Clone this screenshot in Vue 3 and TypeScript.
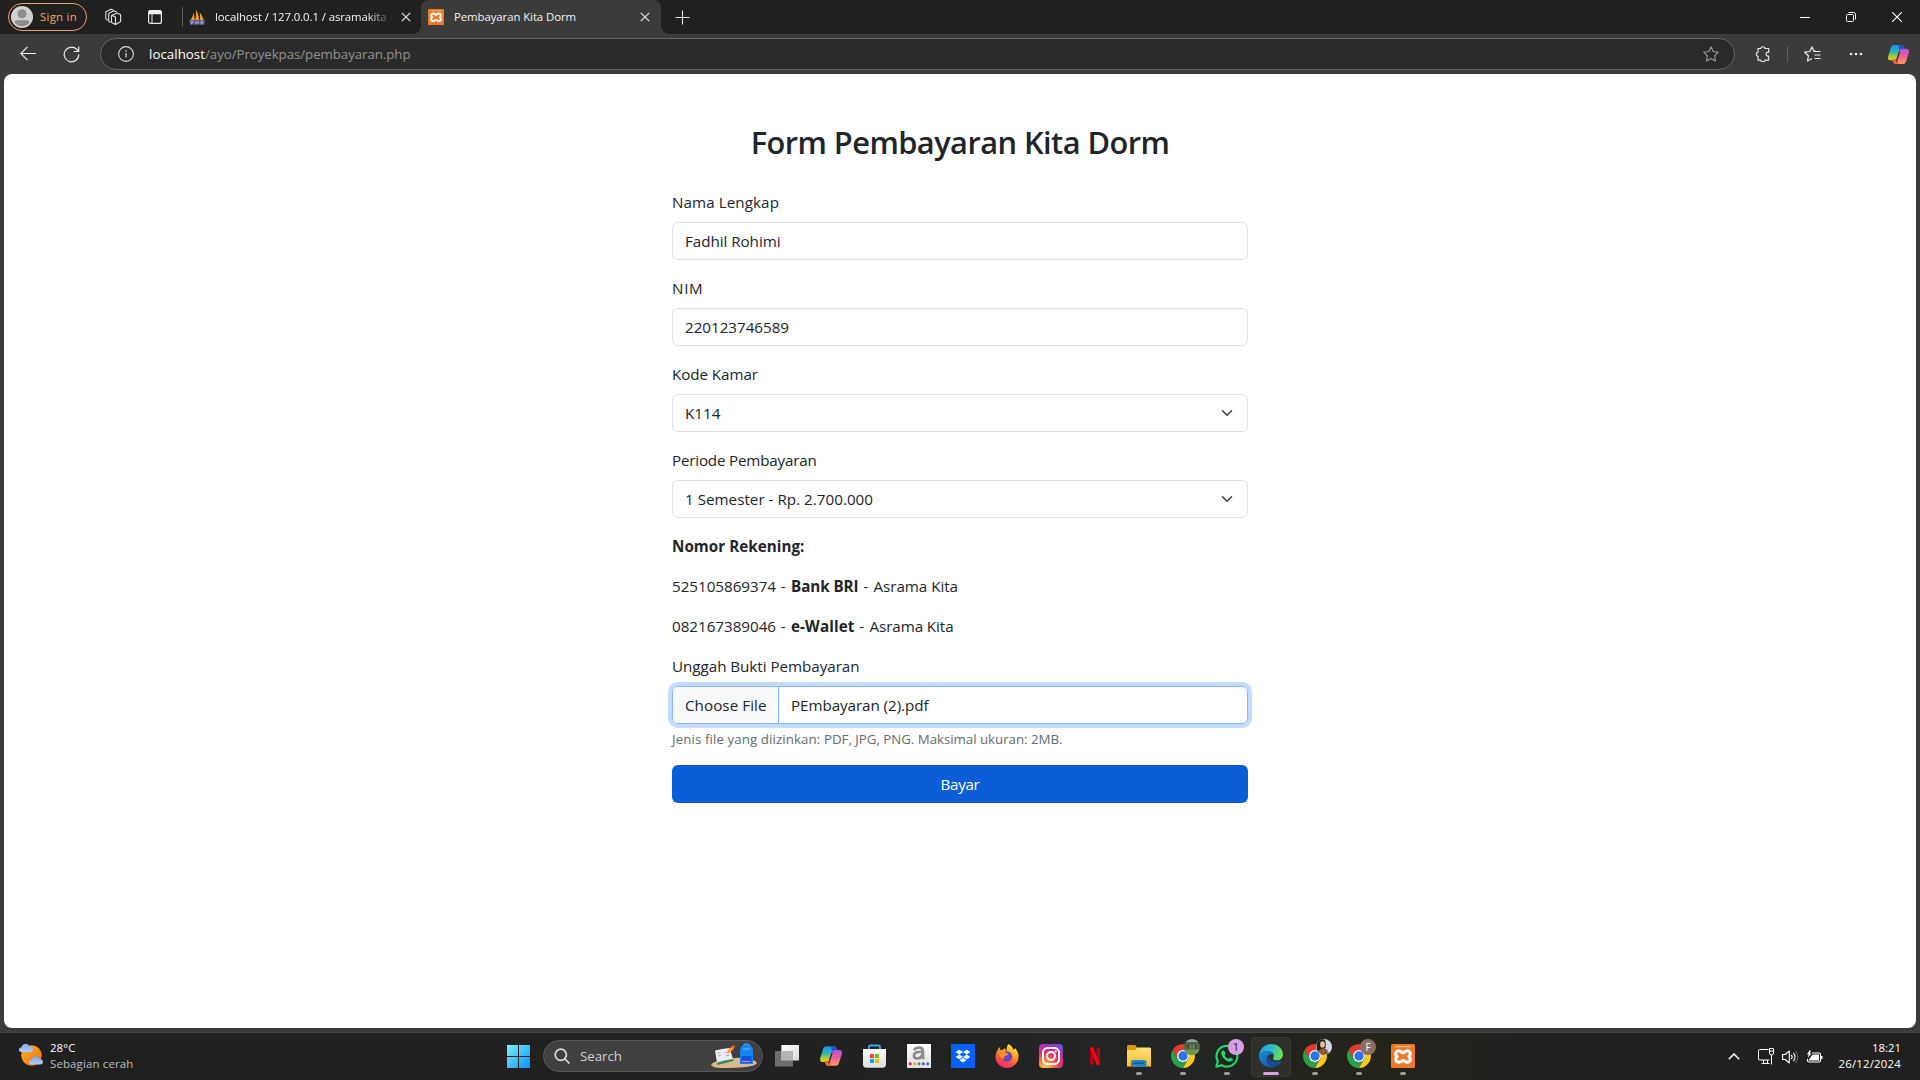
<script setup lang="ts">
interface Field {
  label: string
  labelWidth: number
  value: string
  valueWidth: number
  select?: boolean
}

interface TaskItem {
  id: string
  running?: boolean
  active?: boolean
  badge?: 'photo-green' | 'photo-portrait' | 'count' | 'initial'
  badgeText?: string
}

// Spreads the letters of an element over the given advance width.
const vFit = {
  mounted(el: HTMLElement, binding: { value: number }) {
    const count = (el.textContent ?? '').length
    if (!count) return
    const natural = el.getBoundingClientRect().width
    el.style.letterSpacing = `${(binding.value - natural) / count}px`
  },
}

const fields: Field[] = [
  { label: 'Nama Lengkap', labelWidth: 107, value: 'Fadhil Rohimi', valueWidth: 95.5 },
  { label: 'NIM', labelWidth: 31.5, value: '220123746589', valueWidth: 104 },
  { label: 'Kode Kamar', labelWidth: 86, value: 'K114', valueWidth: 35.5, select: true },
  { label: 'Periode Pembayaran', labelWidth: 144.5, value: '1 Semester - Rp. 2.700.000', valueWidth: 188, select: true },
]

const accounts = [
  { number: '525105869374', numberWidth: 104, name: 'Bank BRI', nameWidth: 67.5, owner: 'Asrama Kita', ownerWidth: 84.5 },
  { number: '082167389046', numberWidth: 104, name: 'e-Wallet', nameWidth: 63.5, owner: 'Asrama Kita', ownerWidth: 84 },
]

const tasks: TaskItem[] = [
  { id: 'taskview' },
  { id: 'copilot' },
  { id: 'store' },
  { id: 'amazon' },
  { id: 'dropbox' },
  { id: 'firefox' },
  { id: 'instagram' },
  { id: 'netflix' },
  { id: 'folder', running: true },
  { id: 'chrome', running: true, badge: 'photo-green' },
  { id: 'whatsapp', running: true, badge: 'count', badgeText: '1' },
  { id: 'edge', running: true, active: true },
  { id: 'chrome', running: true, badge: 'photo-portrait' },
  { id: 'chrome', running: true, badge: 'initial', badgeText: 'F' },
  { id: 'xampp', running: true },
]
</script>

<template>
  <div class="screen">
    <svg class="sprites" width="0" height="0" aria-hidden="true">
      <defs>
        <linearGradient id="cpA" x1="0" y1="0" x2="0" y2="1">
          <stop offset="0" stop-color="#1b8fe8" /><stop offset=".45" stop-color="#2fb5b0" /><stop offset=".75" stop-color="#a9c93a" /><stop offset="1" stop-color="#f5cf1d" />
        </linearGradient>
        <linearGradient id="cpB" x1="0" y1="0" x2="0" y2="1">
          <stop offset="0" stop-color="#a951e8" /><stop offset=".45" stop-color="#ee5c9c" /><stop offset="1" stop-color="#ff9a5a" />
        </linearGradient>
        <linearGradient id="ffA" x1=".8" y1="0" x2=".3" y2="1">
          <stop offset="0" stop-color="#fff04a" /><stop offset=".4" stop-color="#ffa020" /><stop offset=".75" stop-color="#ff4a3c" /><stop offset="1" stop-color="#f0268a" />
        </linearGradient>
        <radialGradient id="igA" cx=".25" cy="1" r="1.2">
          <stop offset="0" stop-color="#ffd45c" /><stop offset=".3" stop-color="#fb7a3c" /><stop offset=".55" stop-color="#e0306e" /><stop offset=".8" stop-color="#a833c0" /><stop offset="1" stop-color="#4a5fe0" />
        </radialGradient>
        <linearGradient id="foA" x1="0" y1="0" x2="0" y2="1">
          <stop offset="0" stop-color="#ffe07a" /><stop offset="1" stop-color="#fbbd28" />
        </linearGradient>
        <linearGradient id="edA" x1="0" y1=".2" x2="1" y2=".4">
          <stop offset="0" stop-color="#1a9be0" /><stop offset=".5" stop-color="#2bbccc" /><stop offset="1" stop-color="#6fe04c" />
        </linearGradient>
        <linearGradient id="edB" x1="0" y1="0" x2="1" y2="1">
          <stop offset="0" stop-color="#1a8fdc" /><stop offset="1" stop-color="#0c4f9c" />
        </linearGradient>
        <linearGradient id="winA" x1="0" y1="0" x2="1" y2="1">
          <stop offset="0" stop-color="#7deeff" /><stop offset="1" stop-color="#0a93fa" />
        </linearGradient>
        <linearGradient id="sunA" x1="0" y1="0" x2="1" y2="1">
          <stop offset="0" stop-color="#fbb62a" /><stop offset="1" stop-color="#ee6a14" />
        </linearGradient>
        <linearGradient id="clA" x1="0" y1="0" x2="0" y2="1">
          <stop offset="0" stop-color="#7ea7f0" /><stop offset="1" stop-color="#b4cdfa" />
        </linearGradient>
        <linearGradient id="tvA" x1="0" y1="0" x2="1" y2="1">
          <stop offset="0" stop-color="#fff" /><stop offset="1" stop-color="#d8d8d8" />
        </linearGradient>
        <linearGradient id="bgA" x1="0" y1="0" x2="0" y2="1">
          <stop offset="0" stop-color="#fff" /><stop offset="1" stop-color="#dedede" />
        </linearGradient>

        <symbol id="i-copilot" viewBox="0 0 24 24">
          <path d="M7.200 2.200h7.600c1.500 0 2.300.9 2.700 2.300l.8 2.500h-2.800c-1.500 0-2.200.9-2.600 2.300l-2 6.400c-.5 1.700-1.400 2.300-3 2.300H3.600c-2.200 0-3-1.800-2.400-4L4 5c.5-1.800 1.500-2.800 3.200-2.800z" fill="url(#cpA)" />
          <path d="M12 2.200h2.800c1.500 0 2.300.9 2.700 2.300l.8 2.500h-2.800c-1.200 0-1.900.5-2.300 1.500z" fill="#1b55c4" />
          <path d="M16.800 21.800H9.200c-1.500 0-2.300-.9-2.700-2.300L5.700 17h2.800c1.500 0 2.200-.9 2.600-2.300l2-6.400C13.600 6.600 14.500 6 16.100 6h4.300c2.200 0 3 1.800 2.400 4L20 19c-.5 1.800-1.500 2.800-3.200 2.800z" fill="url(#cpB)" />
          <path d="M12 21.800H9.200c-1.500 0-2.300-.9-2.700-2.300L5.700 17h2.800c1.200 0 1.900-.5 2.300-1.500z" fill="#f2602c" />
          <path d="M13.600 9.200 11 17.200c-.5 1.500-1 2.200-1.800 2.600L10.400 15l2-6.200z" fill="#252525" />
        </symbol>

        <symbol id="i-taskview" viewBox="0 0 24 24">
          <path d="M6.500 1h17a.5.500 0 0 1 .5.500v15H6z" fill="url(#tvA)" />
          <rect x="0" y="7" width="18" height="15.500" rx=".5" fill="#6e6e6e" />
          <path d="M6 7h12v9.500H6z" fill="#b4b4b4" />
        </symbol>

        <symbol id="i-store" viewBox="0 0 24 24">
          <path d="M6 6V2.800c0-.8.5-1.300 1.300-1.300h8.400c.8 0 1.300.5 1.300 1.300V6" fill="none" stroke="#2fb0ea" stroke-width="1.800" />
          <path d="M0 5h23v15.500c0 2-1.300 3.300-3.300 3.300H3.300c-2 0-3.300-1.300-3.300-3.300z" fill="url(#bgA)" />
          <path d="M7 10h4v4H7z" fill="#f04e24" /><path d="M12 10h4v4h-4z" fill="#7cba08" /><path d="M7 15h4v4H7z" fill="#05a4ee" /><path d="M12 15h4v4h-4z" fill="#fdb905" />
        </symbol>

        <symbol id="i-amazon" viewBox="0 0 24 24">
          <rect width="24" height="24" fill="url(#bgA)" />
          <path d="M7.200 6.200c.8-2 2.300-2.700 4.500-2.700 3 0 4.300 1.400 4.300 4v4.700c0 1.200.3 1.800 1 2.600M15.500 7.800c-5.500-.4-8.500.9-8.500 3.700 0 1.900 1.200 3 3.200 3 2.800 0 5-1.900 5.300-5" fill="none" stroke="#8c8c8c" stroke-width="2.700" />
          <circle cx="3.300" cy="19.800" r="1.500" fill="#e8222c" /><circle cx="7.700" cy="19.800" r="1.500" fill="#f4a024" /><circle cx="12" cy="19.800" r="1.500" fill="#2fa84c" /><circle cx="16.300" cy="19.800" r="1.500" fill="#8a3cc0" /><circle cx="20.700" cy="19.800" r="1.500" fill="#1d7fd0" />
        </symbol>

        <symbol id="i-dropbox" viewBox="0 0 24 24">
          <rect width="24" height="24" fill="#0061fe" />
          <path d="M8.300 5.700 12 8.100 8.300 10.500 4.600 8.100zM15.700 5.700l3.700 2.400-3.700 2.400L12 8.100zM8.300 10.500l3.700 2.400-3.700 2.400-3.700-2.400zM15.700 10.500l3.700 2.400-3.700 2.400L12 12.900zM12 13.900l3.600 2.300L12 18.500l-3.600-2.300z" fill="#fff" />
        </symbol>

        <symbol id="i-firefox" viewBox="0 0 24 24">
          <path d="M13.500 0c3 1.500 4.500 4 4.700 5.500 1 0 1.800-.6 1.800-1.500 2.500 3 3.700 5.700 3.500 9.300C23.200 19.300 18 24 12 24S.6 19.300.5 13c0-3 1-5.500 2.800-8.300L4.600 3l.9 3.200L8 5.600 10.300 4c-.3 1.500.1 2.400 1.200 3 0-2.700.3-5 2-7z" fill="url(#ffA)" />
          <circle cx="12" cy="12.500" r="5.200" fill="#7041c8" />
          <path d="M3.500 8.500c2.500-2 6-2 7.500.5l2.500.8c-.5 1.600-2 1.600-3.500 2-1.300.6-1.300 2.200 0 3-3.300 0-5.700-2.300-6.500-6.300z" fill="#ff9226" />
        </symbol>

        <symbol id="i-instagram" viewBox="0 0 24 24">
          <rect width="24" height="24" rx="4" fill="url(#igA)" />
          <rect x="4" y="4" width="16" height="16" rx="4.500" fill="none" stroke="#fff" stroke-width="1.900" />
          <circle cx="12" cy="12" r="4" fill="none" stroke="#fff" stroke-width="1.900" />
          <circle cx="16.700" cy="7.300" r="1.100" fill="#fff" />
        </symbol>

        <symbol id="i-netflix" viewBox="0 0 24 24">
          <path d="M7 3.500h3.400v17L7 21zM13.600 3.500H17V21l-3.400-.5z" fill="#b1060f" />
          <path d="M7 3.500h3.400L17 21l-3.600-.4z" fill="#f00a18" />
        </symbol>

        <symbol id="i-folder" viewBox="0 0 24 24">
          <path d="M0 2.500C0 1.700.7 1 1.500 1h6.700L10 3.200V7H0z" fill="#dd9a05" />
          <path d="M0 6h8l2.500-2.500h12c.9 0 1.500.6 1.500 1.500v17.500H0z" fill="url(#foA)" />
          <path d="M4 22.500V18c0-1.200.8-2 2-2h11.500c1.200 0 2 .8 2 2v4.500z" fill="#1d86d2" />
          <path d="M7.500 19.200h8.500" stroke="#0b5a9c" stroke-width="1.600" stroke-linecap="round" />
        </symbol>

        <symbol id="i-chrome" viewBox="2 2 44 44">
          <path d="M4.950 13A22 22 0 0 1 43.050 13H24A11 11 0 0 0 14.470 29.500Z" fill="#e53b2e" />
          <path d="M4.950 13 14.470 29.500A11 11 0 0 0 33.530 29.500L24 46A22 22 0 0 1 4.950 13Z" fill="#2aa04a" />
          <path d="M43.050 13A22 22 0 0 1 24 46L33.530 29.500A11 11 0 0 0 24 13Z" fill="#fcc91c" />
          <circle cx="24" cy="24" r="11" fill="#fff" /><circle cx="24" cy="24" r="8.600" fill="#2a74ee" />
        </symbol>

        <symbol id="i-whatsapp" viewBox="0 0 24 24">
          <path d="M1.300 22.700l1.500-5.500A10.400 10.400 0 1 1 6.700 21.200z" fill="none" stroke="#25d366" stroke-width="2.200" stroke-linejoin="round" />
          <path d="M8.200 6.300c-.5 0-1.900.8-1.900 2.700 0 4 5 9 9 8.700 1.600-.1 2.700-1.200 2.700-2.600 0-.5-2.500-1.700-3-1.700-.6 0-1.100 1.300-1.700 1.300-1 0-3.600-2.500-3.600-3.400 0-.5 1-.9 1-1.500C10.700 9.200 9.400 6.300 8.200 6.300z" fill="#25d366" />
        </symbol>

        <symbol id="i-edge" viewBox="0 0 24 24">
          <path d="M0 11.500C.5 5 5.500 0 12 0c7 0 12 5 12 10.500 0 3.500-2.700 5.800-6 5.800-2.600 0-4-.9-4-1.800 0-.7.8-1 .8-2.700C14.800 9 12 7 8.500 7 4.500 7 1.300 9 0 11.500z" fill="url(#edA)" />
          <path d="M0 11.500C1.300 9 4.500 7 8.500 7c3.500 0 6.300 2 6.300 4.700-.5-.9-1.500-1.500-2.800-1.500-2.500 0-4.300 2.300-4.300 5 0 4.300 4 8 8.800 7.500A12 12 0 0 1 0 11.500z" fill="url(#edB)" />
          <path d="M9.200 12.500c-3.200 4.500.5 9.700 6.300 10.300 3-.8 5.700-2.900 7.100-5.600.3-.5-.2-.8-.7-.5-4.400 2.200-12.500 1.300-12.700-4.200z" fill="#0f4f9e" />
        </symbol>

        <symbol id="i-xampp" viewBox="0 0 24 24">
          <rect width="24" height="24" rx="1.500" fill="#ee7a26" />
          <path d="M4 2.700h16" stroke="#fbc9a0" stroke-width="1" />
          <path d="M8 6.800C6 6.800 4.700 8 4.700 9.700c0 1.200.6 2 1.500 2.700-.9.700-1.500 1.500-1.500 2.800 0 1.700 1.300 2.900 3.300 2.900 1.900 0 2.700-1.600 4-1.600s2.100 1.600 4 1.600c2 0 3.300-1.200 3.300-2.900 0-1.300-.6-2.100-1.500-2.800.9-.7 1.500-1.500 1.500-2.700 0-1.700-1.300-2.900-3.300-2.900-1.900 0-2.700 2-4 2s-2.100-2-4-2z" fill="none" stroke="#fff" stroke-width="3.100" stroke-linejoin="round" />
        </symbol>

        <symbol id="i-close" viewBox="0 0 12 12">
          <path d="M1.800 1.800 10.200 10.200M10.200 1.800 1.800 10.200" fill="none" stroke="#e6e6e6" stroke-width="1.200" />
        </symbol>
      </defs>
    </svg>

    <header class="tabstrip">
      <div class="signin">
        <svg width="22" height="22" viewBox="0 0 22 22">
          <circle cx="11" cy="11" r="11" fill="#d4d2d0" />
          <circle cx="11" cy="7.800" r="4.600" fill="#8f8d8b" />
          <path d="M3.500 16.500c0-1.500 1-2.300 2.300-2.300h10.400c1.300 0 2.300.8 2.300 2.300a9.300 9.300 0 0 1-15 0z" fill="#8f8d8b" />
        </svg>
        <span><span v-fit="37">Sign in</span></span>
      </div>
      <svg class="workspaces" width="18" height="18" viewBox="0 0 18 18" fill="none" stroke="#e2e2e2" stroke-width="1.100" stroke-linejoin="round" stroke-linecap="round">
        <path d="M7.500 8.200c0-.5.200-.8.600-1L13 5l3 1.200c.4.200.6.500.6 1v6c0 .4-.2.700-.5.900l-4.600 2.400-3.500-1.800c-.3-.2-.5-.5-.5-.9zM8 7.600l3.500 1.300v7" />
        <path d="M6.200 14.300l-1-.6c-.4-.2-.5-.5-.5-.9V6c0-.4.2-.7.5-.9L10 2.800l2.300 1" /><path d="M3.300 12l-1-.6c-.3-.2-.5-.5-.5-.9V4.300c0-.4.200-.7.500-.9L7 1.200l2 .8" />
      </svg>
      <svg class="tabactions" width="16" height="16" viewBox="0 0 16 16">
        <rect x="1.600" y="1.600" width="12.800" height="12.800" rx="2" fill="none" stroke="#e8e8e8" stroke-width="1.200" />
        <path d="M1.500 2.800c0-1 .6-1.500 1.500-1.500h10c.9 0 1.500.5 1.500 1.500v2.400h-13z" fill="#f2f2f2" /><path d="M5 5v9" stroke="#e8e8e8" />
      </svg>
      <i class="strip-divider"></i>
      <svg class="pma" width="16" height="16" viewBox="0 0 16 16">
        <path d="M.8 11.500C3 9.500 4.200 6.500 4.800 3l1 8.500zM6 11.500C7 8.500 7.200 4.500 7 .5c2 3 3 7 3 11zM10.800 11.500c.5-3 .4-5.500-.1-8 2 2 3.400 5 3.900 8z" fill="#f29a25" />
        <path d="M0 11h16l-.7 4.500H1z" fill="#585f93" /><path d="M2.500 15.500v-3h1.500v1.500H2.500M7 15.500v-2.800l1 1.300 1-1.300v2.800M12 15.500v-3h1.500v3" stroke="#b9bddd" stroke-width=".7" fill="none" />
      </svg>
      <div class="tab-title faded"><span v-fit="178.500">localhost / 127.0.0.1 / asramakita /</span></div>
      <svg class="tab-close" width="12" height="12"><use href="#i-close" /></svg>
      <div class="tab-active">
        <svg width="16" height="16"><use href="#i-xampp" /></svg>
        <div class="tab-title"><span v-fit="122">Pembayaran Kita Dorm</span></div>
        <svg class="tab-close-active" width="12" height="12"><use href="#i-close" /></svg>
      </div>
      <svg class="plus" width="15" height="15" viewBox="0 0 15 15"><path d="M7.500.5v14M.5 7.500h14" stroke="#e8e8e8" stroke-width="1.100" /></svg>
      <div class="window-buttons">
        <svg width="10" height="10" viewBox="0 0 10 10"><path d="M0 5.500h10" stroke="#fff" /></svg>
        <svg width="10" height="10" viewBox="0 0 10 10" fill="none" stroke="#fff"><rect x=".5" y="2.500" width="7" height="7" rx="1" /><path d="M2.500.5h5a2 2 0 0 1 2 2v5" /></svg>
        <svg width="10" height="10" viewBox="0 0 10 10"><path d="M0 0l10 10M10 0 0 10" stroke="#fff" stroke-width="1.100" /></svg>
      </div>
    </header>

    <nav class="toolbar">
      <svg width="16" height="16" viewBox="0 0 16 16" fill="none" stroke="#ececec" stroke-width="1.200"><path d="M16 7.500H.8M7.500.8.800 7.500l6.700 6.700" /></svg>
      <svg class="reload" width="17" height="17" viewBox="0 0 17 17" fill="none" stroke="#ececec" stroke-width="1.200"><path d="M15.800 8.500a7.300 7.300 0 1 1-2.200-5.200l2 2M15.700.6v4.900h-4.900" /></svg>
      <div class="address">
        <svg width="16" height="16" viewBox="0 0 16 16" fill="none" stroke="#dcdcdc"><circle cx="8" cy="8" r="7.400" stroke-width="1.100" /><path d="M8 7v4.500M8 4.300v1.400" stroke-width="1.200" /></svg>
        <div class="url"><b v-fit="56">localhost</b><span v-fit="205.500">/ayo/Proyekpas/pembayaran.php</span></div>
        <svg width="16" height="16" viewBox="0 0 16 16" fill="none" stroke="#9a9a9a" stroke-width="1.100" stroke-linejoin="round"><path d="M8 .8l2.200 4.700 5.100.7-3.700 3.600.9 5.200L8 12.500 3.500 15l.9-5.200L.700 6.200l5.100-.7z" /></svg>
      </div>
      <svg class="puzzle" width="16" height="16" viewBox="0 0 16 16" fill="none" stroke="#ececec" stroke-width="1.200" stroke-linejoin="round"><path d="M3 2.500h2.700a2.200 2.200 0 0 1 4.300 0h3.700v3.800a2 2 0 1 0 0 3.800v4H10a2.200 2.200 0 0 1-4.300 0H3v-3.700a2.200 2.200 0 0 1 0-4.300z" /></svg>
      <i class="toolbar-divider"></i>
      <svg class="favs" width="17" height="16" viewBox="0 0 17 16" fill="none" stroke="#ececec" stroke-width="1.200" stroke-linejoin="round"><path d="M11.500 5.200 9.800 5 8 .9 5.700 5.500.7 6.200l3.700 3.600-.9 5.200L8 12.500M9.500 5.500H16.500M10.500 9h6M10.500 12.500h6" /></svg>
      <svg class="dots" width="14" height="4" viewBox="0 0 14 4" fill="#ececec"><circle cx="2" cy="2" r="1.300" /><circle cx="7" cy="2" r="1.300" /><circle cx="12" cy="2" r="1.300" /></svg>
      <svg class="copilot" width="23" height="23"><use href="#i-copilot" /></svg>
    </nav>

    <main class="page">
      <form class="form" @submit.prevent>
        <h2><span v-fit="418.500">Form Pembayaran Kita Dorm</span></h2>
        <div v-for="field in fields" :key="field.label" class="group">
          <label><span v-fit="field.labelWidth">{{ field.label }}</span></label>
          <div class="control">
            <span v-fit="field.valueWidth">{{ field.value }}</span>
            <svg v-if="field.select" width="16" height="12" viewBox="0 0 16 16" fill="none" stroke="#343a40" stroke-width="2" stroke-linecap="round" stroke-linejoin="round"><path d="m2 5 6 6 6-6" /></svg>
          </div>
        </div>
        <p><b v-fit="132.500">Nomor Rekening:</b></p>
        <p v-for="account in accounts" :key="account.name"><span v-fit="account.numberWidth">{{ account.number }}</span><span v-fit="15"> - </span><b v-fit="account.nameWidth">{{ account.name }}</b><span v-fit="15"> - </span><span v-fit="account.ownerWidth">{{ account.owner }}</span></p>
        <div class="group">
          <label><span v-fit="187.500">Unggah Bukti Pembayaran</span></label>
          <div class="file">
            <div class="file-button"><span v-fit="81.500">Choose File</span></div>
            <div class="file-name"><span v-fit="137.500">PEmbayaran (2).pdf</span></div>
          </div>
          <div class="hint"><span v-fit="152">Jenis file yang diizinkan: </span><span v-fit="238.500">PDF, JPG, PNG. Maksimal ukuran: 2MB.</span></div>
        </div>
        <button type="submit"><span v-fit="39">Bayar</span></button>
      </form>
    </main>

    <footer class="taskbar">
      <svg class="weather" width="25" height="24" viewBox="0 0 25 24">
        <circle cx="12.500" cy="12.500" r="10.300" fill="url(#sunA)" />
        <path d="M2.500 9C.9 9 0 8 0 6.700c0-1.400 1-2.300 2.400-2.300C3 2 4.500.8 6.700.8c2 0 3.400 1.200 4 2.900 1.800-.2 3.300.8 3.300 2.600C14 8 12.800 9 11.200 9z" fill="url(#clA)" />
        <path d="M12.500 21.500c-1.600 0-2.500-1-2.500-2.300 0-1.400 1-2.300 2.400-2.300.6-2.400 2.100-3.600 4.300-3.600 2 0 3.400 1.200 4 2.900 1.800-.2 3.300.8 3.300 2.600 0 1.700-1.200 2.700-2.800 2.700z" fill="url(#clA)" />
      </svg>
      <div class="weather-text">
        <div><span v-fit="25.500">28°C</span></div>
        <div class="muted"><span v-fit="83.500">Sebagian cerah</span></div>
      </div>

      <div class="tasks">
        <svg class="start" width="23" height="23" viewBox="0 0 23 23"><path d="M0 0h11v11H0zM12 0h11v11H12zM0 12h11v11H0zM12 12h11v11H12z" fill="url(#winA)" /></svg>
        <div class="search">
          <svg width="16" height="16" viewBox="0 0 16 16" fill="none" stroke="#dcdcdc" stroke-width="1.700" stroke-linecap="round"><circle cx="6.800" cy="6.800" r="5.600" /><path d="m11 11 4 4" /></svg>
          <div class="search-label"><span v-fit="42">Search</span></div>
          <svg class="search-art" width="46" height="26" viewBox="0 0 46 26">
            <path d="M0 22c2-4 8-4 14-5l10-2c8-1 20 1 22 5-2 3-8 4-22 4.800C10 25.500 2 25 0 22z" fill="#dcb88c" />
            <path d="m4.500 9 14-3 4 12-16 4z" fill="#2f8f5c" /><path d="m4 7.500 7-1.500 2.500 11.500-7.500 2zM11 6l7.500-1 3.500 11-8.500 1.500z" fill="#ececf4" />
            <path d="m6.500 10 3-.4M7 13l3-.5M13.500 10l4-1M14.500 13l4-1" stroke="#a9a9c0" />
            <path d="m16 10.500.5-3 4.500-4 2 2-4.500 4.500z" fill="#f8a428" /><path d="m20.500 3.500 2-1.800 2 2-1.800 2z" fill="#e64b35" />
            <path d="M29 9c0-5 2-7.500 6.500-7.500S42 4 42 9v12H29z" fill="#1685f2" /><path d="M32.500 2.500C33 .5 38 .5 38.500 2.500" fill="none" stroke="#2b9cf8" stroke-width="1.500" />
            <path d="M30.500 13h10v7h-10z" fill="#0a55d8" /><path d="M31 18.500h8.500" stroke="#cf70e0" stroke-width="1.300" /><path d="M32 6h7" stroke="#6cb8ff" />
          </svg>
        </div>
        <div v-for="(task, index) in tasks" :key="index" class="task" :class="{ active: task.active }">
          <svg class="task-icon" width="24" height="24"><use :href="'#i-' + task.id" /></svg>
          <i v-if="task.running" class="indicator"></i>
          <span v-if="task.badge" class="badge" :class="task.badge">
            <svg v-if="task.badge === 'photo-green'" width="16" height="16" viewBox="0 0 16 16">
              <circle cx="8" cy="8" r="8" fill="#50664a" /><path d="M2 3C5-.8 11-.8 14 3z" fill="#93a5a0" /><path d="M.5 10.500h15c-.8 3.500-4 5.500-7.500 5.500s-6.700-2-7.500-5.500z" fill="#6f964a" /><path d="M4.500 5.500v4.500M11.500 5v5M1.500 7h2" stroke="#3d4d36" stroke-width="1" /><path d="M6.700 6v3.500M9.600 5.500v4" stroke="#8f9d88" stroke-width=".8" />
            </svg>
            <svg v-if="task.badge === 'photo-portrait'" width="16" height="16" viewBox="0 0 16 16">
              <circle cx="8" cy="8" r="8" fill="#cfdae2" /><path d="M2 13C-1 7 1 1 6.500.3 10 0 10 4 9.500 9z" fill="#231c1b" /><ellipse cx="6.500" cy="5.500" rx="2.400" ry="3.200" fill="#e8bb9e" /><path d="M2 13c1-3 5-4.500 9-2.500l2 3.500c-3 2.700-8 2.700-11-1z" fill="#94663a" /><path d="M5 12h1M8 11h1M9 13.500h1M6.500 14h1" stroke="#30201a" />
            </svg>
            {{ task.badgeText }}
          </span>
        </div>
      </div>

      <div class="tray">
        <svg width="12" height="7" viewBox="0 0 12 7" fill="none" stroke="#fff" stroke-width="1.500"><path d="M.8 6.200 6 1l5.200 5.200" /></svg>
        <svg class="monitor" width="17" height="17" viewBox="0 0 17 17" fill="none" stroke="#fff" stroke-width="1"><path d="M10.500 1.500h-9a1 1 0 0 0-1 1v8.500a1 1 0 0 0 1 1h10M5.500 12v3.500M9.500 12v3.500M3.500 15.500h8M11.500.5h4V5a2 2 0 0 1-4 0zM13.500 7v9.500M11.500 3h4" /></svg>
        <svg class="speaker" width="17" height="16" viewBox="0 0 17 16" fill="none" stroke="#fff" stroke-width="1.100" stroke-linejoin="round"><path d="M.6 5.500h2.700L7.300 2v12L3.300 10.500H.6zM9.300 5.800a3.500 3.500 0 0 1 0 4.400M11.300 3.800a6 6 0 0 1 0 8.400" /><path d="M13.400 1.900a9 9 0 0 1 0 12.200" stroke="#666" /></svg>
        <svg class="battery" width="17" height="14" viewBox="0 0 17 14"><path d="M6 3h7a1.500 1.500 0 0 1 1.500 1.500v6A1.500 1.500 0 0 1 13 12H3a1.500 1.500 0 0 1-1.500-1.500V9" fill="none" stroke="#fff" stroke-width="1.100" /><path d="M6.500 4.500H13v6H3V9.500z" fill="#fff" /><path d="M15 6h1.500v3H15z" fill="#fff" /><path d="M3.300.5 1 4.500h1.800L1.500 8l4-4.500H3.800L5 .5z" fill="#fff" /></svg>
        <div class="clock">
          <div><span v-fit="29">18:21</span></div>
          <div><span v-fit="62.500">26/12/2024</span></div>
        </div>
      </div>
    </footer>
  </div>
</template>

<style>
body {
  margin: 0;
  background: #3b3b3b;
}
</style>

<style scoped>
.screen {
  width: 1920px;
  height: 1080px;
  display: flex;
  flex-direction: column;
  overflow: hidden;
  background: #3b3b3b;
  font-family: "Open Sans", "Noto Sans", sans-serif;
  white-space: pre;
}
.screen * {
  box-sizing: border-box;
}
.screen svg {
  display: block;
  flex: none;
}
.sprites {
  height: 0;
}

/* Tab strip */
.tabstrip {
  height: 34px;
  flex: none;
  display: flex;
  align-items: center;
  background: #202020;
  color: #f4f4f4;
  font-size: 11.400px;
  line-height: 16px;
}
.signin {
  width: 79px;
  height: 28px;
  margin-left: 8px;
  padding-left: 2px;
  display: flex;
  align-items: center;
  gap: 7px;
  border: 1px solid #f0a06a;
  border-radius: 14px;
  color: #f2a674;
}
.workspaces { margin-left: 17px; }
.tabactions { margin-left: 25px; }
.strip-divider {
  width: 1px;
  height: 20px;
  margin-left: 19px;
  background: #5c5c5c;
}
.pma { margin-left: 6px; }
.tab-title { overflow: hidden; }
.faded {
  width: 180px;
  margin-left: 10px;
  -webkit-mask-image: linear-gradient(90deg, #000 152px, transparent 178px);
  mask-image: linear-gradient(90deg, #000 152px, transparent 178px);
}
.tab-close { margin-left: 5px; }
.tab-active {
  position: relative;
  width: 240px;
  height: 34px;
  margin-left: 9px;
  padding: 0 10px 0 7px;
  display: flex;
  align-items: center;
  gap: 10px;
  border-radius: 8px 8px 0 0;
  background: #3b3b3b;
}
.tab-active::before,
.tab-active::after {
  content: "";
  position: absolute;
  bottom: 0;
  width: 8px;
  height: 8px;
}
.tab-active::before {
  left: -8px;
  background: radial-gradient(circle at 0 0, transparent 7.500px, #3b3b3b 8px);
}
.tab-active::after {
  right: -8px;
  background: radial-gradient(circle at 100% 0, transparent 7.500px, #3b3b3b 8px);
}
.tab-close-active { margin-left: auto; }
.plus { margin-left: 14px; }
.window-buttons {
  margin: 0 18px 0 auto;
  display: flex;
  gap: 36px;
}

/* Toolbar */
.toolbar {
  height: 40px;
  flex: none;
  padding-left: 20px;
  display: flex;
  align-items: center;
}
.reload { margin-left: 27px; }
.address {
  width: 1635px;
  height: 32px;
  margin-left: 20px;
  padding: 0 15px 0 17px;
  display: flex;
  align-items: center;
  border: 1px solid #666;
  border-radius: 16px;
  background: #2a2a2a;
}
.url {
  flex: 1;
  margin-left: 15px;
  color: #929292;
  font-size: 13.300px;
  line-height: 20px;
}
.url b {
  color: #fff;
  font-weight: 400;
}
.puzzle { margin-left: 20px; }
.toolbar-divider {
  width: 1px;
  height: 16px;
  margin-left: 16px;
  background: #606060;
}
.favs { margin-left: 16px; }
.dots { margin-left: 28px; }
.copilot { margin-left: 24px; }

/* Page */
.page {
  height: 954px;
  flex: none;
  margin: 0 4px;
  padding-top: 49px;
  border-radius: 8px;
  background: #fff;
}
.form {
  width: 576px;
  margin: 0 auto;
  color: #212529;
  font-size: 15.200px;
  line-height: 24px;
}
.form h2 {
  height: 38px;
  margin: 0 0 29px;
  font-size: 30.800px;
  font-weight: 600;
  line-height: 38px;
  text-align: center;
}
.form b { font-weight: 700; }
.form p {
  height: 24px;
  margin: 0 0 16px;
}
.group { margin-bottom: 16px; }
.group label {
  display: block;
  height: 24px;
  margin-bottom: 8px;
}
.control {
  height: 38px;
  padding: 0 12px;
  display: flex;
  align-items: center;
  justify-content: space-between;
  border: 1px solid #dee2e6;
  border-radius: 6px;
}
.file {
  height: 38px;
  display: flex;
  border: 1px solid #86b7fe;
  border-radius: 6px;
  box-shadow: 0 0 0 4px #c2dbfe;
  line-height: 36px;
}
.file-button {
  width: 106px;
  padding-left: 12px;
  border-right: 1px solid #86b7fe;
  border-radius: 5px 0 0 5px;
  background: #f8f9fa;
}
.file-name { padding-left: 12px; }
.hint {
  height: 21px;
  margin-top: 4px;
  color: #666b70;
  font-size: 13.300px;
  line-height: 23px;
}
.form button {
  display: block;
  width: 100%;
  height: 38px;
  padding: 0;
  border: 0;
  border-radius: 6px;
  background: #0b5ed7;
  color: #fff;
  font: inherit;
  text-align: center;
}

/* Taskbar */
.taskbar {
  height: 48px;
  flex: none;
  margin-top: 4px;
  display: flex;
  align-items: center;
  border-top: 1px solid #444;
  background: linear-gradient(90deg, #202020 0, #212121 45%, #242526 62%, #23241c 68%, #24231a 72%, #202020 79%);
  color: #fff;
  font-size: 11.400px;
  line-height: 16px;
}
.weather {
  margin-left: 19px;
  margin-bottom: 4px;
}
.weather-text {
  width: 200px;
  margin-left: 6px;
  margin-bottom: 1px;
}
.muted { color: #bdbdbd; }
.tasks {
  margin-left: 257px;
  height: 47px;
  display: flex;
  align-items: center;
}
.start { margin-bottom: 1px; }
.search {
  width: 220px;
  height: 32px;
  margin: 0 2px 1px 13px;
  padding: 0 5px 0 10px;
  display: flex;
  align-items: center;
  border: 1px solid #595959;
  border-radius: 16px;
  background: #404040;
}
.search-label {
  margin-left: 10px;
  color: #d0d0d0;
  font-size: 13.300px;
  line-height: 20px;
}
.search-art { margin-left: auto; }
.task {
  position: relative;
  width: 40px;
  height: 40px;
  margin: 0 2px;
  display: flex;
  flex-direction: column;
  align-items: center;
  padding-top: 8px;
  border-radius: 4px;
}
.task.active {
  border: 1px solid #3a3a34;
  padding-top: 7px;
  background: #30302b;
}
.task-icon { margin-top: -1px; }
.indicator {
  width: 6px;
  height: 3px;
  margin-top: 4px;
  border-radius: 2px;
  background: #9b9b9b;
}
.active .indicator {
  width: 16px;
  background: #dc9fe4;
}
.badge {
  position: absolute;
  top: 2px;
  right: 3px;
  width: 16px;
  height: 16px;
  display: flex;
  align-items: center;
  justify-content: center;
  border-radius: 50%;
  font-size: 11px;
  line-height: 16px;
  white-space: normal;
}
.badge.count {
  background: #dc9fe4;
  color: #201820;
}
.badge.initial {
  background: #8d6e63;
  color: #fff;
  font-size: 10px;
}
.tray {
  margin: 0 19px 0 auto;
  display: flex;
  align-items: center;
}
.monitor { margin-left: 18px; }
.speaker { margin-left: 7px; }
.battery { margin-left: 7px; }
.clock {
  width: 78px;
  margin-bottom: 1px;
  text-align: right;
}
</style>
